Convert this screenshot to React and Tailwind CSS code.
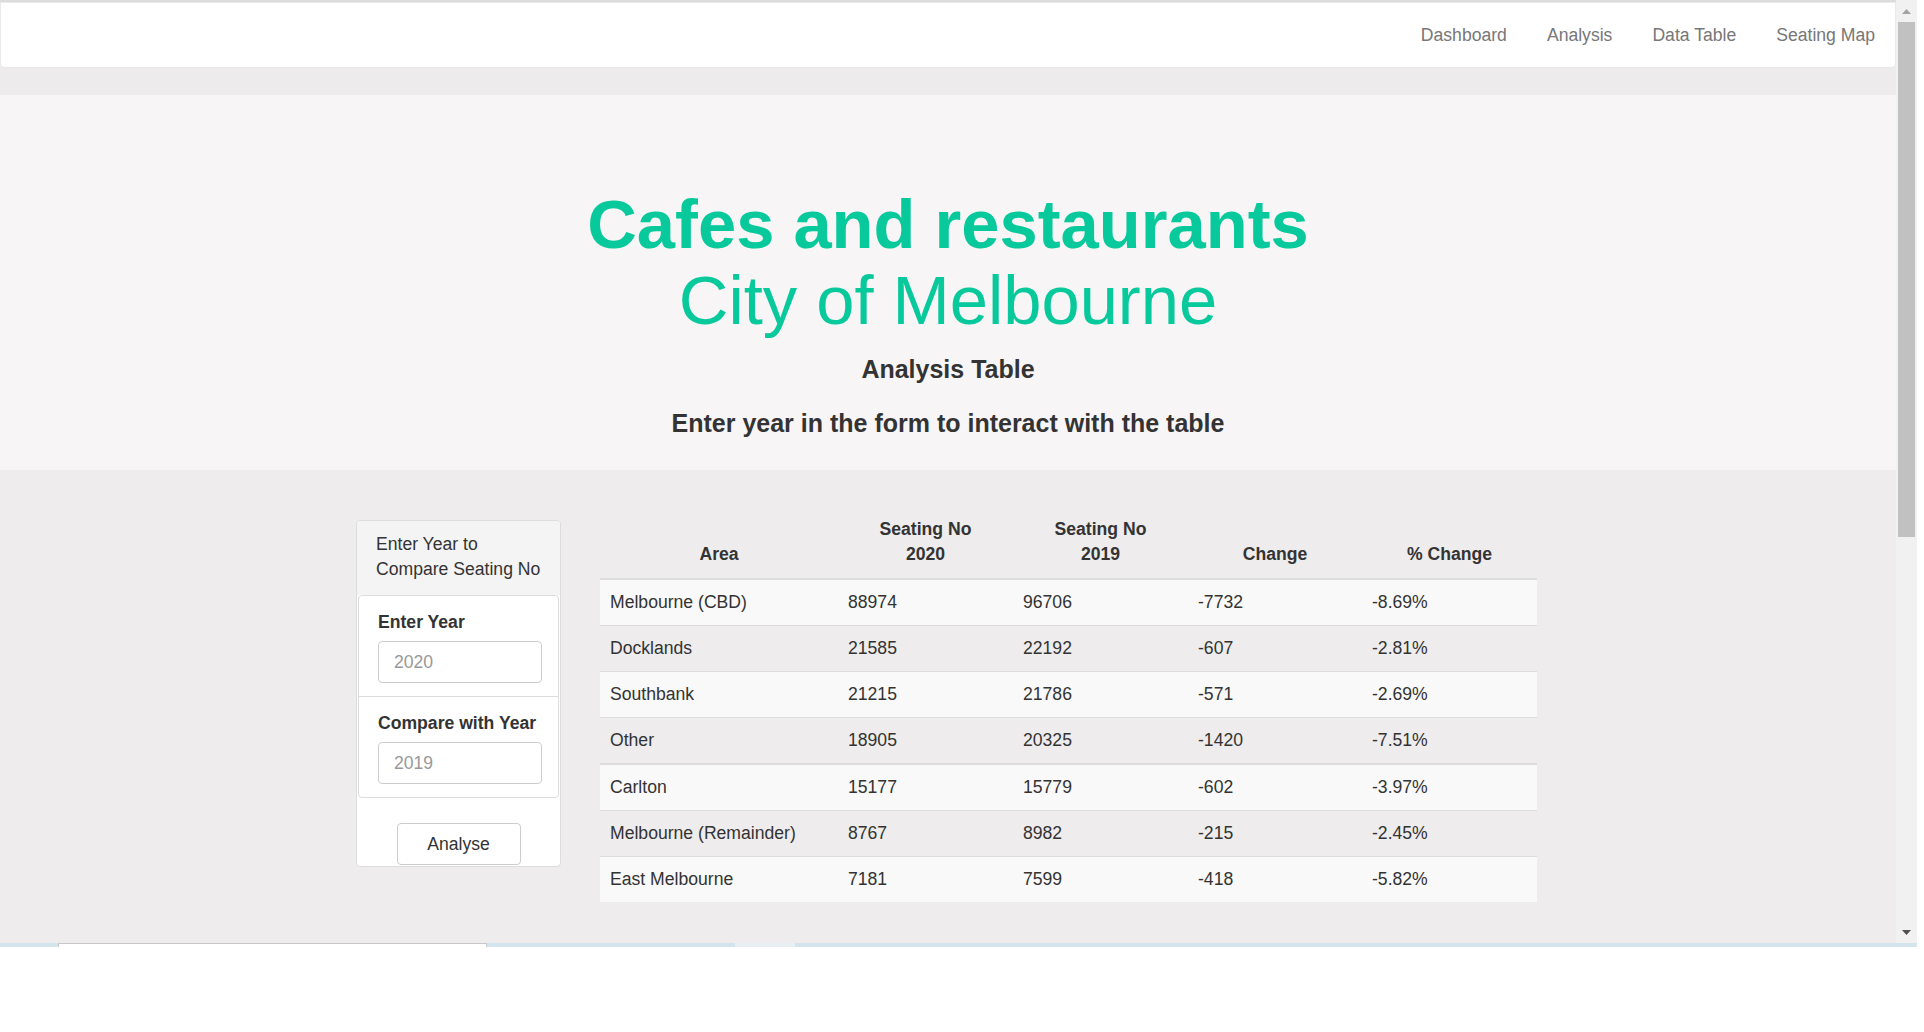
import React from 'react';

const rows = [
  ['Melbourne (CBD)', '88974', '96706', '-7732', '-8.69%'],
  ['Docklands', '21585', '22192', '-607', '-2.81%'],
  ['Southbank', '21215', '21786', '-571', '-2.69%'],
  ['Other', '18905', '20325', '-1420', '-7.51%'],
  ['Carlton', '15177', '15779', '-602', '-3.97%'],
  ['Melbourne (Remainder)', '8767', '8982', '-215', '-2.45%'],
  ['East Melbourne', '7181', '7599', '-418', '-5.82%'],
];

const navLinks = ['Dashboard', 'Analysis', 'Data Table', 'Seating Map'];

const Navbar = () => (
  <nav className="h-[66px] bg-white border border-[#e9e9e9] rounded-b-[5px] flex justify-end items-center">
    {navLinks.map((link) => (
      <a key={link} className="px-[20px] text-[17.6px] leading-[25px] text-[#777]">
        {link}
      </a>
    ))}
  </nav>
);

const Hero = () => (
  <div className="h-[375px] bg-[#f7f5f6] flex flex-col items-center pt-[92px] text-center">
    <h1 className="text-[68.7px] leading-[1.1] text-[#08c99b]">
      <span className="font-bold block">Cafes and restaurants</span>
      <span className="block">City of Melbourne</span>
    </h1>
    <h2 className="mt-[16px] text-[25px] leading-[1.2] font-bold text-[#333]">Analysis Table</h2>
    <h2 className="mt-[24px] text-[25px] leading-[1.2] font-bold text-[#333]">
      Enter year in the form to interact with the table
    </h2>
  </div>
);

const YearField = ({ label, placeholder, last }) => (
  <div className={`px-[19px] pt-[14px] pb-[13px] ${last ? '' : 'border-b border-[#ddd]'}`}>
    <label className="block font-bold text-[17.6px] leading-[25px] text-[#333] mb-[6px]">{label}</label>
    <input
      placeholder={placeholder}
      className="block w-[164px] h-[42px] border border-[#ccc] rounded-[4px] bg-white px-[15px] text-[17.6px] placeholder:text-[#999] outline-none"
    />
  </div>
);

const FormPanel = () => (
  <div className="w-[205px] mt-[16px] bg-white border border-[#ddd] rounded-[4px] flex flex-col">
    <div className="bg-[#f4f4f4] px-[19px] pt-[11px] pb-[13px] text-[17.6px] leading-[25px] text-[#333] rounded-t-[4px]">
      Enter Year to Compare Seating No
    </div>
    <div className="border border-[#ddd] rounded-[4px] mx-[1px]">
      <YearField label="Enter Year" placeholder="2020" />
      <YearField label="Compare with Year" placeholder="2019" last />
    </div>
    <div className="flex justify-center pt-[25px] pb-[1px]">
      <button className="w-[124px] h-[42px] border border-[#ccc] rounded-[4px] bg-white text-[17.6px] text-[#333]">
        Analyse
      </button>
    </div>
  </div>
);

const AnalysisTable = () => (
  <table className="w-[937px] table-fixed border-collapse text-[17.6px] leading-[25px] text-[#333]">
    <colgroup>
      <col className="w-[238px]" />
      <col className="w-[175px]" />
      <col className="w-[175px]" />
      <col className="w-[174px]" />
      <col className="w-[175px]" />
    </colgroup>
    <thead>
      <tr>
        {['Area', 'Seating No 2020', 'Seating No 2019', 'Change', '% Change'].map((h) => (
          <th
            key={h}
            className="align-bottom text-center font-bold px-[10px] pt-[13px] pb-[11px] border-b-2 border-[#ddd]"
          >
            {h.startsWith('Seating No') ? (
              <>
                Seating No
                <br />
                {h.slice(-4)}
              </>
            ) : (
              h
            )}
          </th>
        ))}
      </tr>
    </thead>
    <tbody>
      {rows.map((r, i) => (
        <tr
          key={r[0]}
          className={`${i % 2 === 0 ? 'bg-[#f9f9f9]' : ''} ${i === 4 ? 'border-t-2' : 'border-t'} border-[#ddd]`}
        >
          {r.map((c, j) => (
            <td key={j} className="px-[10px] py-[10px] text-left whitespace-nowrap">
              {c}
            </td>
          ))}
        </tr>
      ))}
    </tbody>
  </table>
);

const Scrollbar = () => (
  <div className="w-[21px] h-full bg-[#f1f1f1] flex flex-col items-center">
    <div className="h-[22px] flex items-center justify-center">
      <svg width="9" height="5" viewBox="0 0 9 5">
        <polygon points="0,5 4.5,0 9,5" fill="#a3a3a3" />
      </svg>
    </div>
    <div className="w-[17px] h-[515px] bg-[#c1c1c1]" />
    <div className="flex-1" />
    <div className="h-[22px] flex items-center justify-center">
      <svg width="9" height="5" viewBox="0 0 9 5">
        <polygon points="0,0 9,0 4.5,5" fill="#505050" />
      </svg>
    </div>
  </div>
);

export default function App() {
  return (
    <div
      className="w-[1924px] h-[1032px] bg-white overflow-hidden"
      style={{ fontFamily: '"Liberation Sans", Arial, sans-serif' }}
    >
      <div className="flex h-[943px] w-[1917px]">
        <div className="w-[1896px] h-full flex flex-col bg-[#eeeced]">
          <div className="h-[2px] bg-[#dcdcdc]" />
          <Navbar />
          <div className="h-[27px] bg-[#edebec]" />
          <Hero />
          <div className="flex-1 flex items-start gap-[39px] pl-[356px] pt-[34px]">
            <FormPanel />
            <AnalysisTable />
          </div>
        </div>
        <Scrollbar />
      </div>
      <div className="flex h-[4px] w-[1917px] bg-[#d4e4ec]">
        <div className="w-[58px]" />
        <div className="w-[429px] bg-white border-t border-x border-[#c8c8c8]" />
        <div className="w-[248px]" />
        <div className="w-[60px] bg-[#e8eff2]" />
      </div>
    </div>
  );
}
